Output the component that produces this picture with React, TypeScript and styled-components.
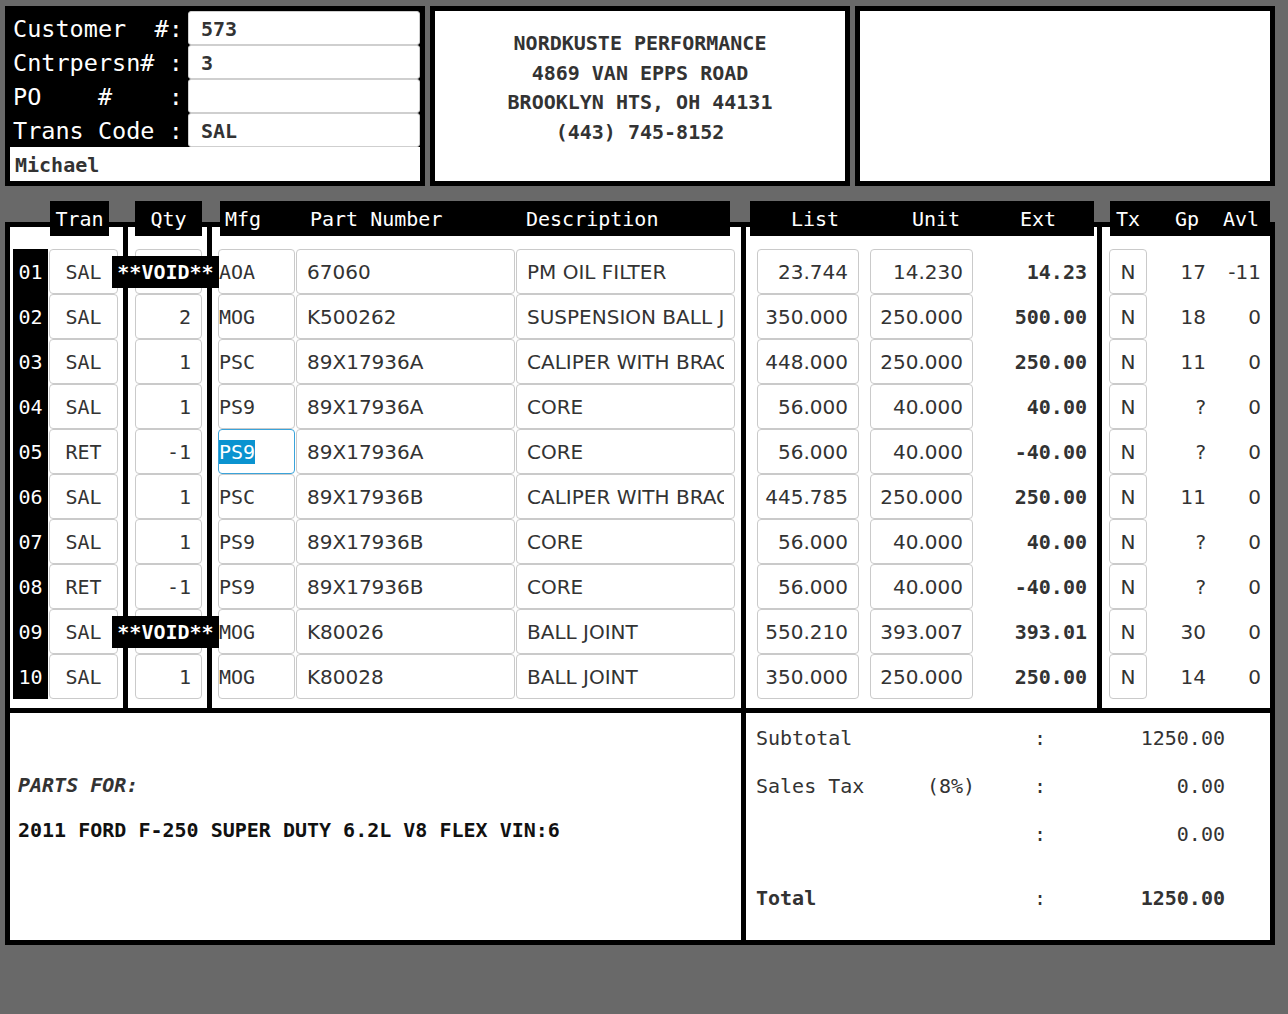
import React from "react";
import styled, { createGlobalStyle } from "styled-components";

const MONO = `"DejaVu Sans Mono", "Liberation Mono", monospace`;
const SANS = `"DejaVu Sans", "Liberation Sans", sans-serif`;
const COLS = "113px 79px 529px 351px 168px";

const GlobalStyle = createGlobalStyle`
  html, body { margin: 0; padding: 0; background: #696969; }
  body { font-family: ${MONO}; }
  * { box-sizing: border-box; }
`;

const Page = styled.div`
  width: 1288px;
  min-height: 1014px;
  padding: 6px 0 0 5px;
`;

const TopRow = styled.div`
  display: flex;
  gap: 5px;
`;

const Panel = styled.div`
  width: 420px;
  height: 180px;
  border: 5px solid #000;
  background: #fff;
`;

const CustomerPanel = styled(Panel)`
  background: #000;
  display: grid;
  grid-template-columns: 178px 1fr;
  grid-template-rows: repeat(5, 34px);
`;

const FieldLabel = styled.div`
  color: #fff;
  font: 23.5px ${MONO};
  white-space: pre;
  padding: 1px 0 0 3px;
  display: flex;
  align-items: center;
`;

const FieldBox = styled.div`
  background: #fff;
  border: 1px solid #cfcfcf;
  border-radius: 3px;
  padding: 1px 0 0 12px;
  font: bold 20px ${MONO};
  color: #333;
  display: flex;
  align-items: center;
`;

const NameRow = styled.div`
  grid-column: 1 / -1;
  background: #fff;
  padding: 1px 0 0 5px;
  font: bold 20px ${MONO};
  color: #333;
  display: flex;
  align-items: center;
`;

const AddressPanel = styled(Panel)`
  padding-top: 18px;
  text-align: center;
  font: bold 20px ${MONO};
  line-height: 29.5px;
  color: #333;
`;

const HeaderRow = styled.div`
  position: relative;
  z-index: 1;
  display: grid;
  grid-template-columns: ${COLS};
  column-gap: 5px;
  padding: 0 5px;
  margin-top: 15px;
  height: 35px;
`;

const Tab = styled.div<{ $ml: number; $w: number; $pl?: number; $center?: boolean }>`
  margin-left: ${(p) => p.$ml}px;
  width: ${(p) => p.$w}px;
  height: 35px;
  background: #000;
  color: #fff;
  font: 20px ${MONO};
  display: flex;
  align-items: center;
  justify-content: ${(p) => (p.$center ? "center" : "flex-start")};
  padding-left: ${(p) => p.$pl ?? 0}px;
  white-space: pre;
`;

const TabLabel = styled.span<{ $w?: number }>`
  flex: none;
  width: ${(p) => (p.$w ? `${p.$w}px` : "auto")};
`;

const Frame = styled.div`
  margin-top: -14px;
  width: 1270px;
  background: #000;
  padding: 5px;
  display: grid;
  grid-template-columns: ${COLS};
  gap: 5px;
`;

const Group = styled.div<{ $pl: number; $pr: number }>`
  background: #fff;
  padding: 22px ${(p) => p.$pr}px 9px ${(p) => p.$pl}px;
  display: flex;
  flex-direction: column;
`;

const Line = styled.div<{ $gap?: number }>`
  display: flex;
  height: 45px;
  gap: ${(p) => p.$gap ?? 0}px;
`;

const RowNum = styled.div`
  flex: none;
  width: 35px;
  background: #000;
  color: #fff;
  font: 20px ${MONO};
  display: flex;
  align-items: center;
  justify-content: center;
`;

const Cell = styled.div<{
  $w: number;
  $ml?: number;
  $pl?: number;
  $pr?: number;
  $sans?: boolean;
  $focus?: boolean;
}>`
  position: relative;
  flex: none;
  width: ${(p) => p.$w}px;
  height: 45px;
  margin-left: ${(p) => p.$ml ?? 0}px;
  border: 1px solid ${(p) => (p.$focus ? "#3aa3da" : "#cacaca")};
  border-radius: 4px;
  background: #fff;
  padding: 0 ${(p) => p.$pr ?? 10}px 0 ${(p) => p.$pl ?? 10}px;
  display: flex;
  align-items: center;
  font-family: ${(p) => (p.$sans ? SANS : MONO)};
  font-size: 20px;
  color: #333;
`;

const CellText = styled.span<{ $align?: "left" | "center" | "right" }>`
  flex: 1;
  min-width: 0;
  overflow: hidden;
  white-space: pre;
  text-align: ${(p) => p.$align ?? "left"};
`;

const Highlight = styled.span`
  background: #0a93d0;
  color: #fff;
`;

const Plain = styled.div<{ $w: number; $bold?: boolean; $sans?: boolean; $pr?: number }>`
  flex: none;
  width: ${(p) => p.$w}px;
  padding-right: ${(p) => p.$pr ?? 0}px;
  display: flex;
  align-items: center;
  justify-content: flex-end;
  font-family: ${(p) => (p.$sans ? SANS : MONO)};
  font-weight: ${(p) => (p.$bold ? "bold" : "normal")};
  font-size: 20px;
  color: #333;
  white-space: pre;
`;

const VoidTag = styled.div`
  position: absolute;
  left: -24px;
  top: 6px;
  width: 107px;
  height: 32px;
  background: #000;
  color: #fff;
  font: bold 20px ${MONO};
  display: flex;
  align-items: center;
  justify-content: center;
  z-index: 2;
`;

const FooterLeft = styled.div`
  grid-column: 1 / 4;
  height: 227px;
  background: #fff;
  padding: 60px 8px 0;
  font: bold 20px ${MONO};
  line-height: 24px;
`;

const PartsFor = styled.div`
  font-style: italic;
  color: #333;
`;

const Vehicle = styled.div`
  margin-top: 21px;
  color: #111;
`;

const FooterRight = styled.div`
  grid-column: 4 / 6;
  background: #fff;
  padding: 1px 0 0 10px;
`;

const Totals = styled.div`
  display: grid;
  grid-template-columns: 171px 107px 12px 179px;
  grid-template-rows: 48px 48px 48px 80px;
  font: 20px ${MONO};
  color: #333;
`;

const TCell = styled.div<{ $right?: boolean; $center?: boolean; $bold?: boolean }>`
  display: flex;
  align-items: center;
  white-space: pre;
  justify-content: ${(p) => (p.$right ? "flex-end" : p.$center ? "center" : "flex-start")};
  font-weight: ${(p) => (p.$bold ? "bold" : "normal")};
`;

type Row = {
  n: string;
  tran: string;
  qty: string;
  isVoid?: boolean;
  mfg: string;
  selected?: boolean;
  pn: string;
  desc: string;
  list: string;
  unit: string;
  ext: string;
  tx: string;
  gp: string;
  avl: string;
};

const rows: Row[] = [
  { n: "01", tran: "SAL", qty: "", isVoid: true, mfg: "AOA", pn: "67060", desc: "PM OIL FILTER", list: "23.744", unit: "14.230", ext: "14.23", tx: "N", gp: "17", avl: "-11" },
  { n: "02", tran: "SAL", qty: "2", mfg: "MOG", pn: "K500262", desc: "SUSPENSION BALL JOINT", list: "350.000", unit: "250.000", ext: "500.00", tx: "N", gp: "18", avl: "0" },
  { n: "03", tran: "SAL", qty: "1", mfg: "PSC", pn: "89X17936A", desc: "CALIPER WITH BRACKET", list: "448.000", unit: "250.000", ext: "250.00", tx: "N", gp: "11", avl: "0" },
  { n: "04", tran: "SAL", qty: "1", mfg: "PS9", pn: "89X17936A", desc: "CORE", list: "56.000", unit: "40.000", ext: "40.00", tx: "N", gp: "?", avl: "0" },
  { n: "05", tran: "RET", qty: "-1", mfg: "PS9", selected: true, pn: "89X17936A", desc: "CORE", list: "56.000", unit: "40.000", ext: "-40.00", tx: "N", gp: "?", avl: "0" },
  { n: "06", tran: "SAL", qty: "1", mfg: "PSC", pn: "89X17936B", desc: "CALIPER WITH BRACKET", list: "445.785", unit: "250.000", ext: "250.00", tx: "N", gp: "11", avl: "0" },
  { n: "07", tran: "SAL", qty: "1", mfg: "PS9", pn: "89X17936B", desc: "CORE", list: "56.000", unit: "40.000", ext: "40.00", tx: "N", gp: "?", avl: "0" },
  { n: "08", tran: "RET", qty: "-1", mfg: "PS9", pn: "89X17936B", desc: "CORE", list: "56.000", unit: "40.000", ext: "-40.00", tx: "N", gp: "?", avl: "0" },
  { n: "09", tran: "SAL", qty: "", isVoid: true, mfg: "MOG", pn: "K80026", desc: "BALL JOINT", list: "550.210", unit: "393.007", ext: "393.01", tx: "N", gp: "30", avl: "0" },
  { n: "10", tran: "SAL", qty: "1", mfg: "MOG", pn: "K80028", desc: "BALL JOINT", list: "350.000", unit: "250.000", ext: "250.00", tx: "N", gp: "14", avl: "0" },
];

export default function App() {
  return (
    <Page>
      <GlobalStyle />
      <TopRow>
        <CustomerPanel>
          <FieldLabel>{"Customer  #:"}</FieldLabel>
          <FieldBox>573</FieldBox>
          <FieldLabel>{"Cntrpersn# :"}</FieldLabel>
          <FieldBox>3</FieldBox>
          <FieldLabel>{"PO    #    :"}</FieldLabel>
          <FieldBox />
          <FieldLabel>{"Trans Code :"}</FieldLabel>
          <FieldBox>SAL</FieldBox>
          <NameRow>Michael</NameRow>
        </CustomerPanel>
        <AddressPanel>
          <div>NORDKUSTE PERFORMANCE</div>
          <div>4869 VAN EPPS ROAD</div>
          <div>BROOKLYN HTS, OH 44131</div>
          <div>(443) 745-8152</div>
        </AddressPanel>
        <Panel />
      </TopRow>

      <HeaderRow>
        <Tab $ml={40} $w={59} $center>Tran</Tab>
        <Tab $ml={7} $w={67} $center>Qty</Tab>
        <Tab $ml={8} $w={510} $pl={5}>
          <TabLabel $w={85}>Mfg</TabLabel>
          <TabLabel $w={216}>Part Number</TabLabel>
          <TabLabel>Description</TabLabel>
        </Tab>
        <Tab $ml={4} $w={344} $pl={41}>
          <TabLabel $w={121}>List</TabLabel>
          <TabLabel $w={108}>Unit</TabLabel>
          <TabLabel>Ext</TabLabel>
        </Tab>
        <Tab $ml={8} $w={160} $pl={6}>
          <TabLabel $w={59}>Tx</TabLabel>
          <TabLabel $w={48}>Gp</TabLabel>
          <TabLabel>Avl</TabLabel>
        </Tab>
      </HeaderRow>

      <Frame>
        <Group $pl={3} $pr={5}>
          {rows.map((r) => (
            <Line key={r.n}>
              <RowNum>{r.n}</RowNum>
              <Cell $w={69} $ml={1} $pl={4} $pr={4}>
                <CellText $align="center">{r.tran}</CellText>
              </Cell>
            </Line>
          ))}
        </Group>
        <Group $pl={7} $pr={5}>
          {rows.map((r) => (
            <Line key={r.n}>
              <Cell $w={67} $pl={4} $pr={10}>
                <CellText $align="right">{r.qty}</CellText>
                {r.isVoid && <VoidTag>**VOID**</VoidTag>}
              </Cell>
            </Line>
          ))}
        </Group>
        <Group $pl={6} $pr={6}>
          {rows.map((r) => (
            <Line key={r.n} $gap={1}>
              <Cell $w={77} $pl={0} $pr={2} $focus={r.selected}>
                <CellText>{r.selected ? <Highlight>{r.mfg}</Highlight> : r.mfg}</CellText>
              </Cell>
              <Cell $w={219} $sans>
                <CellText>{r.pn}</CellText>
              </Cell>
              <Cell $w={219} $sans>
                <CellText>{r.desc}</CellText>
              </Cell>
            </Line>
          ))}
        </Group>
        <Group $pl={11} $pr={10}>
          {rows.map((r) => (
            <Line key={r.n}>
              <Cell $w={102} $sans $pl={2} $pr={10}>
                <CellText $align="right">{r.list}</CellText>
              </Cell>
              <Cell $w={103} $ml={11} $sans $pl={2} $pr={9}>
                <CellText $align="right">{r.unit}</CellText>
              </Cell>
              <Plain $w={114} $bold>{r.ext}</Plain>
            </Line>
          ))}
        </Group>
        <Group $pl={7} $pr={9}>
          {rows.map((r) => (
            <Line key={r.n}>
              <Cell $w={38} $sans $pl={2} $pr={2}>
                <CellText $align="center">{r.tx}</CellText>
              </Cell>
              <Plain $w={59} $sans>{r.gp}</Plain>
              <Plain $w={55} $sans>{r.avl}</Plain>
            </Line>
          ))}
        </Group>

        <FooterLeft>
          <PartsFor>PARTS FOR:</PartsFor>
          <Vehicle>2011 FORD F-250 SUPER DUTY 6.2L V8 FLEX VIN:6</Vehicle>
        </FooterLeft>
        <FooterRight>
          <Totals>
            <TCell>Subtotal</TCell>
            <TCell />
            <TCell $center>:</TCell>
            <TCell $right>1250.00</TCell>

            <TCell>Sales Tax</TCell>
            <TCell>(8%)</TCell>
            <TCell $center>:</TCell>
            <TCell $right>0.00</TCell>

            <TCell />
            <TCell />
            <TCell $center>:</TCell>
            <TCell $right>0.00</TCell>

            <TCell $bold>Total</TCell>
            <TCell />
            <TCell $center>:</TCell>
            <TCell $right $bold>1250.00</TCell>
          </Totals>
        </FooterRight>
      </Frame>
    </Page>
  );
}
